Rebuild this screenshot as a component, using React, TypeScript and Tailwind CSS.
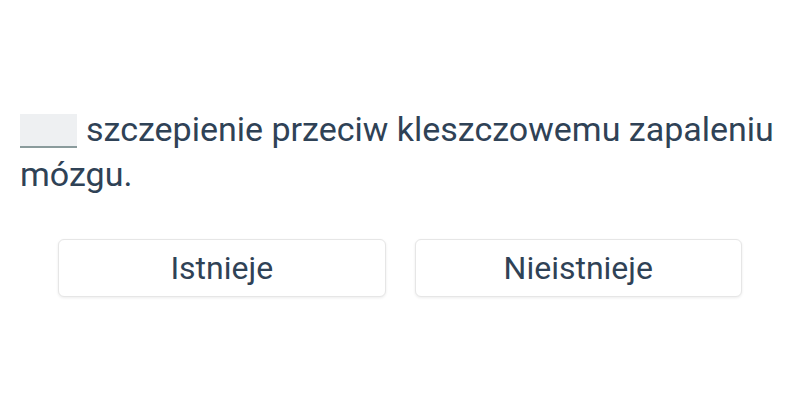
export default function App() {
  return (
    <div className="w-[800px] h-[400px] bg-white flex flex-col justify-center px-5 pt-1 font-['Roboto',sans-serif] text-[#2f4256]">
      {/* Question */}
      <p className="text-[34px] leading-[45px]">
        <span className="inline-block w-[57px] h-[34px] align-[-7px] bg-[#eef0f2] border-b-2 border-[#8a9b9c] mr-[9px]"></span>
        szczepienie przeciw kleszczowemu zapaleniu mózgu.
      </p>

      {/* Answers */}
      <div className="mt-[42px] px-[38px] grid grid-cols-2 gap-[29px]">
        <button className="h-[58px] bg-white rounded-md border border-[#e6e6e6] shadow-[0_1px_3px_rgba(0,0,0,0.08)] text-[32px]">
          Istnieje
        </button>
        <button className="h-[58px] bg-white rounded-md border border-[#e6e6e6] shadow-[0_1px_3px_rgba(0,0,0,0.08)] text-[32px]">
          Nieistnieje
        </button>
      </div>
    </div>
  );
}
